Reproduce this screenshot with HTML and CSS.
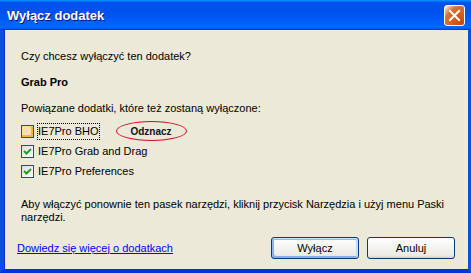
FILE: index.html
```html
<!DOCTYPE html>
<html lang="pl">
<head>
<meta charset="utf-8">
<title>Wyłącz dodatek</title>
<link rel="stylesheet" href="styles.css">
</head>
<body>
<div class="window">
  <div class="titlebar">
    <span class="title">Wyłącz dodatek</span>
    <button class="close" aria-label="Zamknij">
      <svg width="21" height="21" viewBox="0 0 21 21"><path d="M6 6 L15 15 M15 6 L6 15" stroke="#fff" stroke-width="2" stroke-linecap="square"/></svg>
    </button>
  </div>
  <div class="body">
    <div class="content">
      <p class="line q">Czy chcesz wyłączyć ten dodatek?</p>
      <p class="line name">Grab Pro</p>
      <p class="line related">Powiązane dodatki, które też zostaną wyłączone:</p>
      <ul class="list">
        <li class="item"><span class="box hot"></span><span class="label focus">IE7Pro BHO</span><span class="note">Odznacz</span></li>
        <li class="item"><span class="box"><svg width="11" height="11" viewBox="0 0 11 11"><path d="M2 5 L4.5 7.5 L9 3" fill="none" stroke="#21a121" stroke-width="2"/></svg></span><span class="label">IE7Pro Grab and Drag</span></li>
        <li class="item"><span class="box"><svg width="11" height="11" viewBox="0 0 11 11"><path d="M2 5 L4.5 7.5 L9 3" fill="none" stroke="#21a121" stroke-width="2"/></svg></span><span class="label">IE7Pro Preferences</span></li>
      </ul>
      <p class="line info">Aby włączyć ponownie ten pasek narzędzi, kliknij przycisk Narzędzia i użyj menu Paski narzędzi.</p>
    </div>
    <div class="footer">
      <a class="link" href="#">Dowiedz się więcej o dodatkach</a>
      <div class="buttons">
        <button class="btn default">Wyłącz</button>
        <button class="btn">Anuluj</button>
      </div>
    </div>
  </div>
</div>
</body>
</html>
```
FILE: styles.css
```css
html, body {
  margin: 0;
  padding: 0;
  background: #ece9d8;
}
.window {
  width: 471px;
  height: 273px;
  display: flex;
  flex-direction: column;
  font-family: "Liberation Sans", Arial, sans-serif;
  font-size: 11px;
  color: #000;
}
.titlebar {
  height: 30px;
  flex: none;
  display: flex;
  align-items: center;
  justify-content: space-between;
  padding: 0 6px 0 7px;
  box-sizing: border-box;
  background: linear-gradient(180deg, #0997ff, #0053ee 8%, #0050ee 40%, #06f 88%, #06f 93%, #005bff 95%, #003dd7 96%, #003dd7);
}
.title {
  color: #fff;
  font-family: "Liberation Sans", Arial, sans-serif;
  font-weight: bold;
  font-size: 13px;
  text-shadow: 1px 1px #0f1089;
}
.close {
  width: 21px;
  height: 21px;
  padding: 0;
  border: 1px solid #fff;
  border-radius: 3px;
  box-sizing: border-box;
  background: radial-gradient(circle at 90% 90%, #cc4600 0%, #dc6527 55%, #cd7546 70%, #ffccb2 90%, #fff 100%);
  display: flex;
  align-items: center;
  justify-content: center;
  margin-top: 1px;
}
.close svg { display: block; margin: -1px; }
.body {
  flex: 1;
  display: flex;
  flex-direction: column;
  background: #ece9d8;
  border-left: 4px solid #0b4fe0;
  border-right: 3px solid #0b4fe0;
  border-bottom: 4px solid #0831d9;
  box-shadow: inset 1px 0 #0831d9;
  padding: 20px 13px 10px 13px;
}
.content {
  padding-left: 4px;
}
.line {
  margin: 0;
  line-height: 13px;
}
.name {
  margin-top: 13px;
  font-weight: bold;
}
.related {
  margin-top: 13px;
}
.list {
  list-style: none;
  margin: 6px 0 0 0;
  padding: 0;
}
.item {
  height: 20px;
  display: flex;
  align-items: center;
}
.box {
  width: 13px;
  height: 13px;
  box-sizing: border-box;
  border: 1px solid #1c5180;
  background: linear-gradient(135deg, #dcdcd7, #fff);
  display: flex;
  align-items: center;
  justify-content: center;
  flex: none;
}
.box.hot {
  box-shadow: inset -2px -2px #f8b636, inset 2px 2px #fedf9c;
  background: linear-gradient(135deg, #f7d7a6, #fbe3c0);
}
.label {
  margin-left: 3px;
  padding: 1px 0;
  border: 1px dotted transparent;
  line-height: 13px;
}
.label.focus {
  border-color: #000;
}
.note {
  margin-left: 16px;
  width: 71px;
  height: 20px;
  box-sizing: border-box;
  border: 1px solid #c8102e;
  border-radius: 50%;
  display: flex;
  align-items: center;
  justify-content: center;
  font-family: "Liberation Sans", Arial, sans-serif;
  font-weight: bold;
  font-size: 10px;
  color: #111;
}
.info {
  margin-top: 17px;
}
.footer {
  margin-top: auto;
  display: flex;
  align-items: center;
  justify-content: space-between;
}
.link {
  color: #0000ff;
  text-decoration: underline;
  line-height: 13px;
}
.buttons {
  display: flex;
  gap: 8px;
}
.btn {
  width: 88px;
  height: 22px;
  box-sizing: border-box;
  border: 1px solid #003c74;
  border-radius: 3px;
  background: linear-gradient(180deg, #fff, #ecebe6 86%, #d6d0c5);
  font-family: "Liberation Sans", Arial, sans-serif;
  font-size: 11px;
  color: #000;
  padding: 0;
}
.btn.default {
  box-shadow: inset -1px 1px #cee7ff, inset 1px 2px #98b8ea, inset -2px 2px #bcd4f6, inset 1px -1px #89ade4, inset 2px -2px #89ade4;
}
```
